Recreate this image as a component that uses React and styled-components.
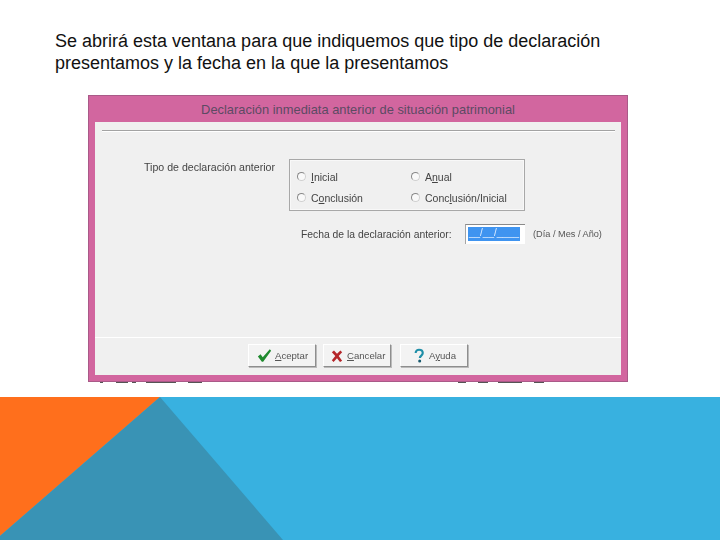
import React from 'react'
import styled, { createGlobalStyle } from 'styled-components'

const GlobalStyle = createGlobalStyle`
  html, body {
    margin: 0;
    padding: 0;
    background: #fff;
  }
`

const Slide = styled.div`
  width: 720px;
  height: 540px;
  overflow: hidden;
  display: flex;
  flex-direction: column;
  background: #fff;
  font-family: "Liberation Sans", Arial, sans-serif;
`

const Heading = styled.p`
  margin: 0;
  padding: 30px 0 0 55px;
  width: 620px;
  height: 95px;
  flex: none;
  box-sizing: border-box;
  font-size: 18px;
  line-height: 22px;
  color: #111;
`

const Dialog = styled.div`
  margin-left: 88px;
  width: 540px;
  height: 287px;
  flex: none;
  box-sizing: border-box;
  display: flex;
  flex-direction: column;
  padding: 0 6px 6px;
  background: #d2669f;
  border: 1px solid #a95a88;
`

const TitleBar = styled.div`
  height: 26px;
  flex: none;
  display: flex;
  align-items: center;
  justify-content: center;
  font-size: 12.9px;
  color: #5c4a63;
`

const Body = styled.div`
  flex: 1;
  display: flex;
  flex-direction: column;
  background: #f0f0f0;
  font-size: 10.5px;
  color: #444;
  filter: blur(0.25px);
`

const Divider = styled.div`
  margin: 8px 6px 0 7px;
  height: 1px;
  background: #a3a3a3;
  border-bottom: 1px solid #fff;
`

const TypeRow = styled.div`
  display: flex;
  margin: 27px 0 0 49px;
`

const FieldLabel = styled.div`
  width: 145px;
  flex: none;
  padding-top: 2px;
  font-size: 10.6px;
`

const GroupBox = styled.div`
  width: 236px;
  height: 52px;
  box-sizing: border-box;
  padding: 7px 0 0 7px;
  display: grid;
  grid-template-columns: 114px 1fr;
  grid-auto-rows: 21px;
  border: 1px solid #a8a8a8;
  box-shadow: inset 0 0 0 1px #f8f8f8;
`

const RadioOption = styled.label`
  display: flex;
  align-items: center;
  gap: 5px;
  height: 19px;
`

const RadioDot = styled.span`
  width: 9px;
  height: 9px;
  flex: none;
  border-radius: 50%;
  background: #f9f9f9;
  border: 1px solid #d0d0d0;
  border-top-color: #888;
  border-left-color: #888;
  box-sizing: border-box;
`

const DateRow = styled.div`
  display: flex;
  align-items: center;
  margin: 13px 0 0 206px;
`

const DateLabel = styled.div`
  width: 164px;
  flex: none;
  font-size: 10.35px;
`

const DateInput = styled.div`
  width: 60px;
  height: 20px;
  flex: none;
  box-sizing: border-box;
  padding: 2px 5px 3px 2px;
  background: #fff;
  border-top: 1px solid #8a8a8a;
  border-left: 1px solid #a5a5a5;
`

const DateFill = styled.div`
  height: 100%;
  overflow: hidden;
  white-space: nowrap;
  background: #3f94f0;
  color: #dfeeff;
  font-size: 10px;
  line-height: 12px;
  text-align: center;
`

const DateHint = styled.div`
  margin-left: 8px;
  white-space: nowrap;
  font-size: 9.2px;
  color: #555;
`

const Footer = styled.div`
  margin-top: auto;
  height: 38px;
  box-sizing: border-box;
  padding: 6px 0 0 153px;
  display: flex;
  gap: 7px;
  border-top: 1px solid #fff;
`

const DialogButton = styled.button`
  width: 68px;
  height: 23px;
  margin-right: ${({ $gapAfter }) => $gapAfter || 0}px;
  padding: 0 0 0 ${({ $inset }) => $inset}px;
  display: flex;
  align-items: center;
  gap: ${({ $iconGap }) => $iconGap}px;
  box-sizing: border-box;
  background: #f3f3f3;
  border: 1px solid #fff;
  border-right-color: #8e8e8e;
  border-bottom-color: #8e8e8e;
  box-shadow: 1px 1px 0 #bbb;
  font-family: inherit;
  font-size: 9.6px;
  color: #555;
`

const CutOffStrip = styled.svg`
  display: block;
  margin-left: 88px;
  flex: none;
`

const Banner = styled.svg`
  display: block;
  margin-top: 12px;
  flex: none;
`

const CheckIcon = () => (
  <svg width="15" height="15" viewBox="0 0 17 16">
    <path d="M1 9 L4 6.5 L6.5 10 L14.5 1 L16 2.5 L7 15 L5.5 15 Z" fill="#1f8a2e" />
  </svg>
)

const CrossIcon = () => (
  <svg width="12" height="14" viewBox="0 0 14 15">
    <path d="M1 3 L3.5 1 L7 5 L11 1 L13 3 L9 7.5 L13 13 L10.5 14.5 L7 10 L3 14.5 L1 12.5 L5 7.5 Z" fill="#b5262a" />
  </svg>
)

const HelpIcon = () => (
  <svg width="10" height="16" viewBox="0 0 12 17">
    <path d="M2 5 C2 2 4 1 6 1 C9 1 10.500 3 10.500 5 C10.500 8 7 8 7 11" fill="none" stroke="#1f8fa8" strokeWidth="2.600" />
    <circle cx="6.800" cy="14.500" r="1.800" fill="#17596e" />
  </svg>
)

const Radio = ({ children }) => (
  <RadioOption>
    <RadioDot />
    <span>{children}</span>
  </RadioOption>
)

export default function App() {
  return (
    <>
      <GlobalStyle />
      <Slide>
        <Heading>
          Se abrirá esta ventana para que indiquemos que tipo de declaración presentamos y la fecha en la que la presentamos
        </Heading>
        <Dialog>
          <TitleBar>Declaración inmediata anterior de situación patrimonial</TitleBar>
          <Body>
            <Divider />
            <TypeRow>
              <FieldLabel>Tipo de declaración anterior</FieldLabel>
              <GroupBox>
                <Radio><u>I</u>nicial</Radio>
                <Radio>A<u>n</u>ual</Radio>
                <Radio>C<u>o</u>nclusión</Radio>
                <Radio>Conc<u>l</u>usión/Inicial</Radio>
              </GroupBox>
            </TypeRow>
            <DateRow>
              <DateLabel>Fecha de la declaración anterior:</DateLabel>
              <DateInput>
                <DateFill>__/__/____</DateFill>
              </DateInput>
              <DateHint>(Día / Mes / Año)</DateHint>
            </DateRow>
            <Footer>
              <DialogButton $inset={8} $iconGap={3}>
                <CheckIcon />
                <span><u>A</u>ceptar</span>
              </DialogButton>
              <DialogButton $inset={7} $iconGap={4} $gapAfter={2}>
                <CrossIcon />
                <span><u>C</u>ancelar</span>
              </DialogButton>
              <DialogButton $inset={13} $iconGap={5}>
                <HelpIcon />
                <span>A<u>y</u>uda</span>
              </DialogButton>
            </Footer>
          </Body>
        </Dialog>
        <CutOffStrip width="540" height="3" viewBox="0 0 540 3">
          <path d="M12 0h3v1h-3zM28 0h12v1h-12zM44 0h4v1h-4zM58 0h30v1h-30zM100 0h14v1h-14zM370 0h8v1h-8zM390 0h10v1h-10zM410 0h24v1h-24zM446 0h10v1h-10z" fill="#555" />
        </CutOffStrip>
        <Banner width="720" height="143" viewBox="0 0 720 143">
          <rect width="720" height="143" fill="#38b1e0" />
          <path d="M0 0 H160 L0 139 Z" fill="#ff6f1c" />
          <path d="M160 0 L0 139 V143 H283 Z" fill="#3993b5" />
        </Banner>
      </Slide>
    </>
  )
}
